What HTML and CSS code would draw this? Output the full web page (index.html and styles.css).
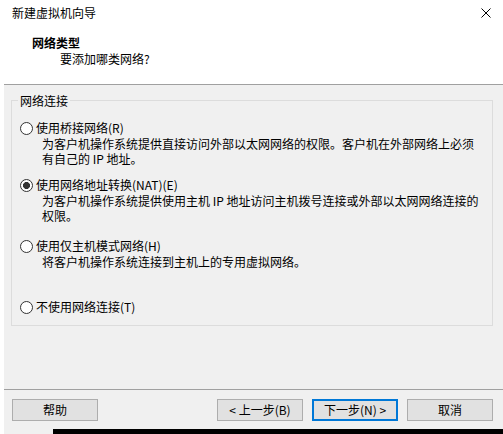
FILE: index.html
```html
<!DOCTYPE html>
<html lang="zh-CN">
<head>
<meta charset="utf-8">
<title>新建虚拟机向导</title>
<link rel="stylesheet" href="styles.css">
</head>
<body>
<div class="window">
  <div class="titlebar">
    <span class="title">新建虚拟机向导</span>
    <svg class="close" width="10" height="10" viewBox="0 0 10 10"><path d="M0.5 0.5 L9.5 9.5 M9.5 0.5 L0.5 9.5" stroke="#000" stroke-width="1" fill="none"/></svg>
  </div>
  <div class="header">
    <div class="h-title">网络类型</div>
    <div class="h-sub">要添加哪类网络?</div>
  </div>
  <div class="body">
    <div class="group">
      <span class="legend">网络连接</span>
      <div class="option opt1">
        <span class="radio"></span><span class="label">使用桥接网络(R)</span>
      </div>
      <div class="desc">为客户机操作系统提供直接访问外部以太网网络的权限。客户机在外部网络上必须<br>有自己的 IP 地址。</div>
      <div class="option opt2">
        <span class="radio checked"></span><span class="label">使用网络地址转换(NAT)(E)</span>
      </div>
      <div class="desc">为客户机操作系统提供使用主机 IP 地址访问主机拨号连接或外部以太网网络连接的<br>权限。</div>
      <div class="option opt3">
        <span class="radio"></span><span class="label">使用仅主机模式网络(H)</span>
      </div>
      <div class="desc">将客户机操作系统连接到主机上的专用虚拟网络。</div>
      <div class="option opt4">
        <span class="radio"></span><span class="label">不使用网络连接(T)</span>
      </div>
    </div>
  </div>
  <div class="footer">
    <button class="btn">帮助</button>
    <div class="spacer"></div>
    <button class="btn">&lt; 上一步(B)</button>
    <button class="btn primary">下一步(N) &gt;</button>
    <button class="btn">取消</button>
  </div>
  <div class="bottom">
    <div class="bottom-gray"></div>
    <div class="bottom-dark"></div>
  </div>
</div>
</body>
</html>
```
FILE: styles.css
```css
html, body {
  margin: 0;
  padding: 0;
  background: #fff;
}
body {
  width: 503px;
  height: 434px;
  overflow: hidden;
  font-family: "Noto Sans CJK SC", "Microsoft YaHei", sans-serif;
  font-size: 12px;
  color: #000;
}
.window {
  display: flex;
  flex-direction: column;
  width: 503px;
  height: 434px;
}
.titlebar {
  height: 26px;
  line-height: 26px;
  display: flex;
  align-items: center;
  padding-left: 12px;
  padding-right: 12px;
}
.title {
  flex: 1;
}
.close {
  display: block;
  margin-right: 0;
}
.header {
  padding: 9px 0 17px 32px;
  height: 32px;
}
.h-title {
  font-weight: bold;
  line-height: 16px;
}
.h-sub {
  line-height: 16px;
  margin-left: 28px;
}
.body {
  margin-left: 4px;
  background: #f0f0f0;
  border-top: 1px solid #a0a0a0;
  height: 304px;
  padding-top: 15px;
  box-sizing: border-box;
  height: 305px;
}
.group {
  margin-left: 7px;
  width: 482px;
  height: 226px;
  box-sizing: border-box;
  border: 1px solid #dcdcdc;
  display: flex;
  flex-direction: column;
  align-items: flex-start;
}
.legend {
  margin-top: -7px;
  margin-left: 6px;
  padding: 0 2px;
  line-height: 14px;
  height: 14px;
  background: #f0f0f0;
}
.option {
  display: flex;
  align-items: center;
  height: 16px;
  padding-left: 8px;
}
.opt1 { margin-top: 12px; }
.opt2 { margin-top: 11px; }
.opt3 { margin-top: 15px; }
.opt4 { margin-top: 30px; }
.radio {
  width: 13px;
  height: 13px;
  box-sizing: border-box;
  border: 1px solid #333;
  border-radius: 50%;
  background: #fff;
  margin-right: 3px;
  flex: none;
}
.radio.checked {
  background: radial-gradient(circle, #333 0, #333 3.2px, #fff 3.8px);
}
.label {
  line-height: 16px;
}
.desc {
  padding-left: 30px;
  line-height: 15px;
  white-space: nowrap;
}
.footer {
  margin-left: 4px;
  background: #f0f0f0;
  border-top: 1px solid #a0a0a0;
  height: 40px;
  box-sizing: border-box;
  display: flex;
  align-items: flex-start;
  padding: 9px 10px 0 8px;
}
.spacer {
  flex: 1;
}
.btn {
  width: 86px;
  height: 22px;
  box-sizing: border-box;
  border: 1px solid #adadad;
  background: #e1e1e1;
  font-family: inherit;
  font-size: 12px;
  line-height: 18px;
  padding: 0;
  color: #000;
  margin-left: 9px;
}
.btn:first-child {
  margin-left: 0;
}
.btn.primary {
  border: 2px solid #0078d7;
}
.bottom {
  margin-left: 4px;
  height: 5px;
  display: flex;
}
.bottom-gray {
  width: 49px;
  background: #f0f0f0;
}
.bottom-dark {
  flex: 1;
  background: #000;
}
```
